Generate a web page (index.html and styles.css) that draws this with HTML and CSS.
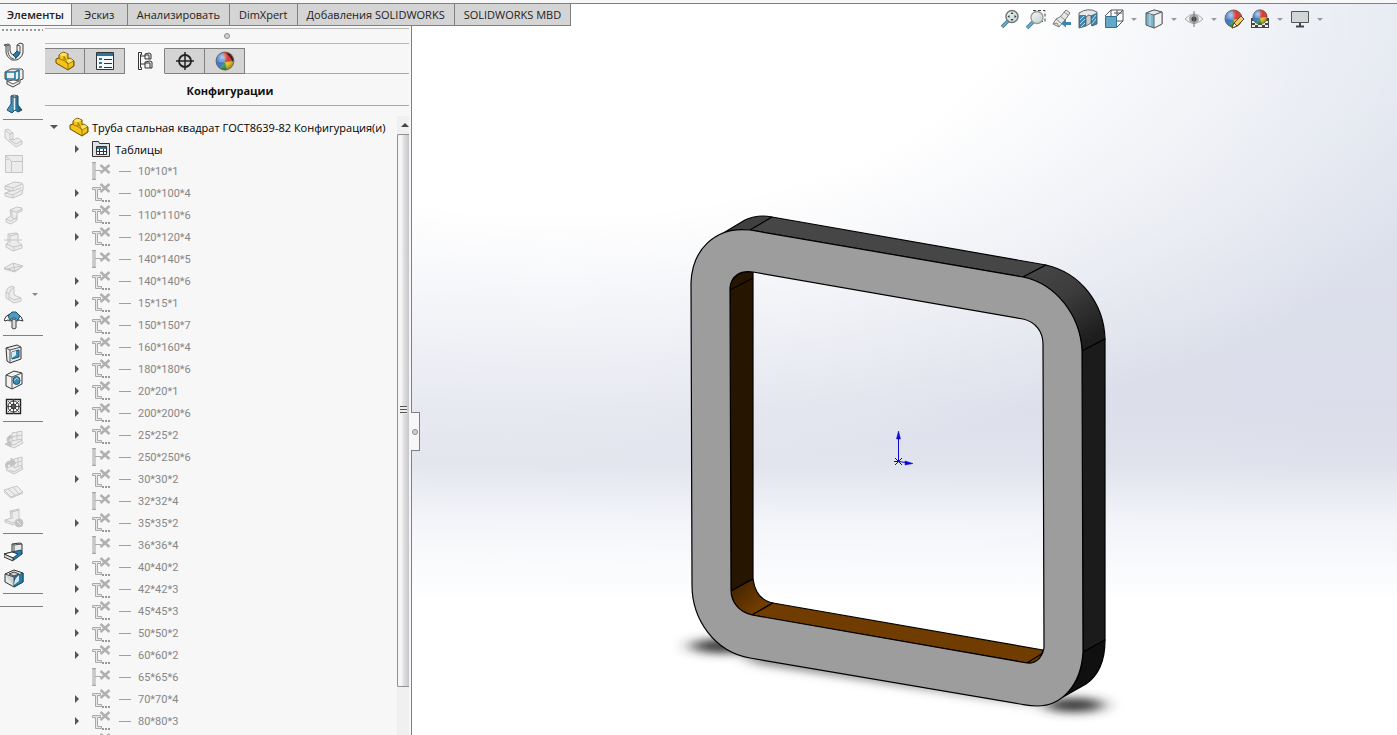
FILE: index.html
```html
<!DOCTYPE html>
<html lang="ru">
<head>
    <meta charset="UTF-8">
    <meta name="viewport" content="width=device-width, initial-scale=1.0">
    <title>SOLIDWORKS - Труба стальная квадрат ГОСТ8639-82</title>
    <link rel="stylesheet" href="styles.css">
</head>
<body>
    <!-- Icons used more than once -->
    <svg class="sprite" aria-hidden="true">
        <defs>
            <linearGradient id="blueSteel" x1="0" x2="1"><stop offset="0" stop-color="#5fa3c4"/><stop offset="1" stop-color="#145a80"/></linearGradient>
            <linearGradient id="lens" x1="0" y1="0" x2="1" y2="1"><stop offset="0" stop-color="#f4fafa"/><stop offset="1" stop-color="#bccfd0"/></linearGradient>
            <radialGradient id="shine" cx=".35" cy=".3" r=".7"><stop offset="0" stop-color="#fff" stop-opacity=".6"/><stop offset=".5" stop-color="#fff" stop-opacity="0"/><stop offset="1" stop-color="#000" stop-opacity=".3"/></radialGradient>
        </defs>
        <symbol id="part" viewBox="0 0 20 20">
            <path d="M4 4l4-3 5 2v5l2-1 4 3v5l-6 4L1 12V8l3-1z" fill="#f3c31a" stroke="#6b5000" stroke-linejoin="round"/>
            <path d="M4.500 4L8 1.500 12.500 3 9 5.500zM11 10l4-2.500 3.500 2.500-5 3.500z" fill="#ffe566"/>
            <path d="M9 5.500v4L13 13v5.500l5.500-3.500v-5L13 13zM4.500 7v1L9 9.500" fill="none" stroke="#8a6800" stroke-width=".8"/>
        </symbol>
        <symbol id="ball" viewBox="0 0 20 20">
            <circle cx="10" cy="10" r="9" fill="#e8c128"/>
            <path d="M10 11L1 10a9 9 0 0 0 4 7.500z" fill="#3b76c9"/>
            <path d="M10 11L1 10A9 9 0 0 1 9 1z" fill="#4a82cf"/>
            <path d="M10 11L9 1a9 9 0 0 1 10 9z" fill="#d33a35"/>
            <path d="M10 11l-5 6.500A9 9 0 0 0 12 19z" fill="#35a04e"/>
            <circle cx="10" cy="10" r="9" fill="url(#shine)" stroke="#555" stroke-width=".7"/>
        </symbol>
        <symbol id="cfg" viewBox="0 0 20 20">
            <path d="M1 2h2v16H1zM0 1.500h4M0 18.500h4M3 9.500h6" fill="#e8e8e8" stroke="#a9a9a9"/>
            <path d="M8.500 4l9 8M17.500 4l-9 8" stroke="#b0b0b0" stroke-width="2.500"/>
        </symbol>
        <symbol id="cfgTree" viewBox="0 0 20 20">
            <path d="M.5 4.500h8v2h-3v9h4v2h-6v-11h-3z" fill="#e8e8e8" stroke="#a9a9a9"/>
            <path d="M8.500 1l9 8M17.500 1l-9 8" stroke="#b0b0b0" stroke-width="2.500"/>
            <path d="M10 18h2M13 18h2M16 18h2" stroke="#999" stroke-width="2"/>
        </symbol>
    </svg>

    <div class="topStrip"></div>

    <div class="workspace">
        <nav class="tabs">
            <button type="button" class="tab active">Элементы</button>
            <button type="button" class="tab">Эскиз</button>
            <button type="button" class="tab">Анализировать</button>
            <button type="button" class="tab">DimXpert</button>
            <button type="button" class="tab">Добавления SOLIDWORKS</button>
            <button type="button" class="tab">SOLIDWORKS MBD</button>
        </nav>

        <aside class="side">
            <div class="toolbar">
                <button type="button" class="tool" aria-label="Базовая кромка"><svg viewBox="0 0 20 20"><path d="M0 3l4-1 2 1v6q1 4 4 4 3-1 3-4V3l3-2 3 1v9q-2 6-7 7H8q-6-3-6-9V4z" fill="#eef1f1" stroke="#444"/><path d="M2 4l3-1M4 3v7q1 6 6 7M13 3l3 1v7q-2 4-5 6" fill="none" stroke="#555"/><path d="M9 13l4-4 3 2-4 5z" fill="#2b7ca8" stroke="#164f70"/></svg></button>
                <button type="button" class="tool" aria-label="Преобразовать"><svg viewBox="0 0 20 20"><path d="M1 4l6-3h11l1 1v9l-3 1v3l-7 4-6-3v-5H1z" fill="#eef0f0" stroke="#444"/><path d="M2 4h9v7H2zM11 4l4-2M15 2v9l-4 2" fill="none" stroke="#24769f" stroke-width="1.600"/><path d="M3 13l7-1 5 1-6 3z" fill="#fff" stroke="#555"/></svg></button>
                <button type="button" class="tool" aria-label="Сгиб по сечениям"><svg viewBox="0 0 20 20"><path d="M7 2h7v9l4 5-4 2-3-2-3 3-5-3 4-6z" fill="url(#blueSteel)" stroke="#164f70"/><path d="M7 2q3-2 7 0-3 2-7 0" fill="#eee" stroke="#555"/><path d="M10.500 4v12" stroke="#e6f2f8" stroke-width="1.500"/></svg></button>
                <hr>
                <button type="button" class="tool off" aria-label="Ребро-кромка" disabled><svg viewBox="0 0 20 20"><path d="M1 2l3-1 5 4v7l5-2 4 3v3l-6 3L1 10z"/><path class="line" d="M1 2l5 4v6l6 4 6-3M6 6l3-1M6 12l3-1"/></svg></button>
                <button type="button" class="tool off" aria-label="Каемка" disabled><svg viewBox="0 0 20 20"><path d="M1.500 1.500h17v17h-17z"/><path class="line" d="M7.500 7.500h11M7.500 7.500v11M1.500 1.500l6 6M1.500 6l3-1"/></svg></button>
                <button type="button" class="tool off" aria-label="Подшивка" disabled><svg viewBox="0 0 20 20"><path d="M1 6l9-4 8 1q2 2 1 6l-1 5-9 4-8-2v-3l6-2-6-2z"/><path class="line" d="M1 6l8 2 9-4M1 9l8 2 8-3M9 8v3M1 13l8 2 9-5M9 15v3"/></svg></button>
                <button type="button" class="tool off" aria-label="Изгиб" disabled><svg viewBox="0 0 20 20"><path d="M6 4l7-3 5 1v3l-5 2v7l-6 4-5-2v-3l5-3z"/><path class="line" d="M6 4l6 2 6-3M8 5v7l5 1M2 13l5 2 6-4"/></svg></button>
                <button type="button" class="tool off" aria-label="Нарисованный сгиб" disabled><svg viewBox="0 0 20 20"><path d="M4 2l8-1 2 1v8l4 3v3l-9 3-7-4v-3l2-1z"/><path class="line" d="M4 2l2 2v7M6 4l8-2M0 8h18M2 12l8 3 8-2M10 15v4"/></svg></button>
                <button type="button" class="tool off" aria-label="Поперечный излом" disabled><svg viewBox="0 0 20 20"><path d="M0 10l9-5 10 3-8 6-11-3z"/><path class="line" d="M0 10l11 3 8-5M9 5l2 8M3 11l14-3"/></svg></button>
                <button type="button" class="tool off more" aria-label="Углы" disabled><svg viewBox="0 0 20 20"><path d="M2 8q1-5 6-6l2 1v8l7 3v3l-7 2-8-5z"/><path class="line" d="M2 8l3 2v6M5 10q1-5 5-7M5 13l5 3 7-2"/></svg></button>
                <button type="button" class="tool" aria-label="Инструмент формы"><svg viewBox="0 0 20 20"><path d="M0 10q2-5 6-6h7q5 2 6 7l-4-1-2 1-3-1-4 1-2-1-3 1z" fill="#fff" stroke="#333"/><path d="M4 6l4-4h4l4 4-2 4-3-2H9l-3 2z" fill="#4d9cc0" stroke="#164f70"/><path d="M8 10q2-2 4 0v8q-2 2-4 0z" fill="#ddd" stroke="#444"/></svg></button>
                <hr>
                <button type="button" class="tool" aria-label="Вытянутый вырез"><svg viewBox="0 0 20 20"><path d="M2 4l11-3 4 2v12l-11 4-3-2z" fill="#e8ecec" stroke="#333"/><path d="M2 4l4 2v13M6 6l11-3" fill="none" stroke="#555"/><path d="M8 8l7-2v7l-7 2z" fill="#3b8cb3" stroke="#1a4d69"/><path d="M8 8l4-1v4l-4 3z" fill="#d6edf7"/></svg></button>
                <button type="button" class="tool" aria-label="Простое отверстие"><svg viewBox="0 0 20 20"><path d="M2 5l8-4 8 2v11L8 19l-6-3z" fill="#f1f2f2" stroke="#333"/><path d="M2 5l6 2v12M8 7l10-4" fill="none" stroke="#555"/><ellipse cx="12.500" cy="10.500" rx="3.500" ry="4" fill="#3b8cb3" stroke="#1a4d69"/><path d="M10.500 10.500q2-4 4-1" fill="none" stroke="#d6edf7"/></svg></button>
                <button type="button" class="tool" aria-label="Вентиляционное отверстие"><svg viewBox="0 0 20 20"><path d="M2.500 3.500h14v14h-14z" fill="#fff" stroke="#222" stroke-width="1.400"/><path d="M9.500 3v15M2 10.500h15M4 5l11 11M15 5L4 16" stroke="#555"/><circle cx="9.500" cy="10.500" r="5.500" fill="none" stroke="#222"/><circle cx="9.500" cy="10.500" r="2.500" fill="none" stroke="#222"/></svg></button>
                <hr>
                <button type="button" class="tool off" aria-label="Разогнуть" disabled><svg viewBox="0 0 20 20"><path d="M8 3l10-2v10l1 2-9 5-8-4 6-3z"/><path class="line" d="M8 11l10-2M8 7l10-2M13 2v8M4 13l6 2 8-5"/><path class="arrow" d="M7 5Q1 7 4 13l-3 1 6 3v-6l-2 1Q4 9 8 8z"/></svg></button>
                <button type="button" class="tool off" aria-label="Согнуть" disabled><svg viewBox="0 0 20 20"><path d="M10 3l8-2v10l1 2-9 5-8-4 4-4z"/><path class="line" d="M10 3v9l8-3M10 7l8-2M14 2v9M5 14l5 2 8-5"/><path class="arrow" d="M2 12Q0 5 7 5V2l5 5-5 4V8Q2 8 4 12z"/></svg></button>
                <button type="button" class="tool off" aria-label="Развертка" disabled><svg viewBox="0 0 20 20"><path d="M0 8l13-4 6 6-12 5z"/><path class="line" d="M4 7l7 6M9 5l6 7M0 8v2l7 6 12-5"/></svg></button>
                <button type="button" class="tool off" aria-label="Без сгибов" disabled><svg viewBox="0 0 20 20"><path d="M6 3l9-2v9l2 2-8 5-8-3v-2l6-2z"/><path class="line" d="M6 3l2 1v7M8 4l7-2M1 12l8 3 8-4"/><circle class="arrow" cx="15" cy="15" r="4"/><path class="line cross" d="M13 13l4 4"/></svg></button>
                <hr>
                <button type="button" class="tool" aria-label="Разрыв"><svg viewBox="0 0 20 20"><path d="M8 2l8-1 2 1v10l-9 2-1-3z" fill="#e6eaea" stroke="#333"/><path d="M8 2l2 1v8M10 3l8-1" fill="none" stroke="#555"/><path d="M0 12l8-2 9-2 1 4-8 6-9-3z" fill="#2b7ca8" stroke="#164f70"/><path d="M0 12l8-2 6 2-5 4z" fill="#fff" stroke="#333"/><path d="M0 12v3l9 4v-3z" fill="#ddd" stroke="#333"/></svg></button>
                <button type="button" class="tool" aria-label="Вставить сгибы"><svg viewBox="0 0 20 20"><path d="M1 6l9-4 9 3v9l-9 5-9-5z" fill="#e6eaea" stroke="#333"/><path d="M10 9l9-4v9l-9 5z" fill="#2b7ca8" stroke="#164f70"/><path d="M1 6l9 3v10M5 6l5-2 5 2-5 2z" fill="#cdd3d3" stroke="#444"/><path d="M10 17q0-6 5-10v6z" fill="#cfe8f3"/></svg></button>
                <hr>
                <hr class="end">
            </div>

            <div class="manager">
                <div class="pin"><span class="dot"></span></div>
                <div class="managerTabs">
                    <button type="button" aria-label="Дерево конструирования"><svg viewBox="0 0 20 20"><use href="#part"/></svg></button>
                    <button type="button" aria-label="Свойства"><svg viewBox="0 0 20 20"><path d="M1.500 1.500h17v17h-17z" fill="#f4f8fa" stroke="#333"/><path d="M2 2h16v3H2z" fill="#2778a0"/><path d="M4 7h3v2H4zM4 11h3v2H4zM4 15h3v2H4z" fill="#2778a0"/><path d="M9 8.500h8M9 12.500h8M9 16.500h8" stroke="#333"/></svg></button>
                    <button type="button" class="active" aria-label="Конфигурации"><svg viewBox="0 0 20 20"><path d="M3.500 1.500h3v2h-1v13h1v2h-3zM6 5h4M6 13h4" fill="#fff" stroke="#333"/><path d="M10 3l4-1 2 1v5h-6zM10 11l5-1 2 1v6h-7z" fill="#eee" stroke="#333"/><path d="M10 4h4v4M10 12h5v5" fill="none" stroke="#333"/></svg></button>
                    <button type="button" aria-label="DimXpert"><svg viewBox="0 0 20 20"><circle cx="10" cy="10" r="6" fill="none" stroke="#222" stroke-width="1.800"/><path d="M10 1v18M1 10h18" stroke="#222" stroke-width="1.500"/></svg></button>
                    <button type="button" aria-label="Отображение"><svg viewBox="0 0 20 20"><use href="#ball"/><path d="M11 2q5 0 7 6v3q-2-5-7-9z" fill="#222"/></svg></button>
                </div>
                <h2>Конфигурации</h2>
                <div class="treeBox">
                    <ul class="tree" id="tree">
                        <li class="root"><span class="arrow open"></span><svg viewBox="0 0 20 20"><use href="#part"/></svg><span>Труба стальная квадрат ГОСТ8639-82 Конфигурация(и)</span></li>
                        <li class="folder"><span class="arrow"></span><svg viewBox="0 0 20 20"><path d="M.5 17.500v-15h6l1 2h10v13z" fill="#dfe3e6" stroke="#333"/><path d="M4.500 7.500h10v8h-10z" fill="#fff" stroke="#333"/><path d="M5 8h9v2H5z" fill="#2778a0"/><path d="M5 12.500h9M7.500 10v5M11.500 10v5" stroke="#333"/></svg><span>Таблицы</span></li>
                    </ul>
                    <div class="scroll">
                        <div class="scrollUp"></div>
                        <div class="scrollTrack"><div class="thumb"><i></i></div></div>
                    </div>
                </div>
            </div>
            <div class="splitter"><span class="dot"></span></div>
        </aside>

        <main class="viewport">
            <div class="viewTools">
                <button type="button" aria-label="Изменить в размер экрана"><svg viewBox="0 0 20 20"><path d="M2 18l6-6" stroke="#3b7c9c" stroke-width="3.500"/><path d="M2 18l6-6" stroke="#7fb6cf" stroke-width="1.500"/><circle cx="12" cy="7.500" r="6" fill="url(#lens)" stroke="#777" stroke-width="1.500"/><path d="M12 3l1.500 2h-3zM12 12l1.500-2h-3zM7.500 7.500l2-1.500v3zM16.500 7.500l-2-1.500v3z" fill="#333"/></svg></button>
                <button type="button" aria-label="Увеличить элемент вида"><svg viewBox="0 0 20 20"><path d="M7 1.500h12v11h-3" fill="none" stroke="#444" stroke-dasharray="3 2"/><path d="M1 19l6-6" stroke="#3b7c9c" stroke-width="3.500"/><path d="M1 19l6-6" stroke="#7fb6cf" stroke-width="1.500"/><circle cx="11" cy="8.500" r="6" fill="url(#lens)" stroke="#999" stroke-width="1.300"/></svg></button>
                <button type="button" aria-label="Предыдущий вид"><svg viewBox="0 0 20 20"><path d="M14 1l4 3-5 7-6 7-6-3 3-5 4-2z" fill="#e8e8e4" stroke="#777"/><path d="M8 7l5 4M4 10l5 4M1 15l4-1 2 4M12 3l4 3" fill="none" stroke="#888"/><path d="M9 14.500l5-4V13h5v3h-5v2.500z" fill="#3c87ad"/></svg></button>
                <button type="button" aria-label="Разрез"><svg viewBox="0 0 20 20"><path d="M1 4q9-6 18-1v12l-5 2V7q-4-2-6 1v9l-7 2z" fill="#e6e9ea" stroke="#666"/><path d="M8 8q3-3 5-1v7l-5 3z" fill="#c9ced0" stroke="#777"/><path d="M1.500 6.500h6v10l-6 2zM13.500 6.500l5-2v10l-5 2z" fill="#3e87aa" stroke="#2a6380" stroke-width=".7"/><path d="M2 11l4-4M2 15l5-5M3 18l4-4M14 11l4-5M14 15l4-5" stroke="#b5dcec"/></svg></button>
                <button type="button" aria-label="Ориентация вида"><svg viewBox="0 0 20 20"><path d="M1 7l6-6h12v11l-6 6" fill="#fff" stroke="#555"/><path d="M13 7l6-6M7 1v6M13 12h6M10 4h8M13 1v6" fill="none" stroke="#555"/><path d="M1.500 7.500h11v11h-11z" fill="#63a9c6" stroke="#31718f"/></svg></button>
                <span class="drop"></span>
                <button type="button" aria-label="Стиль отображения"><svg viewBox="0 0 20 20"><path d="M2 4l8-3 8 2v12l-8 4-8-3z" fill="#7bb6cf" stroke="#555"/><path d="M2 4l8 2 8-3-8-2z" fill="#dcebf0" stroke="#666"/><path d="M10 6l8-3v12l-8 4z" fill="#f0f2f3" stroke="#666"/><path d="M6 5v12" stroke="#c9e2ec"/></svg></button>
                <span class="drop"></span>
                <button type="button" aria-label="Скрыть или показать"><svg viewBox="0 0 20 20"><path d="M1 10q9-10 18 0-9 9-18 0z" fill="#f4f4f4" stroke="#aaa"/><circle cx="10" cy="10" r="5" fill="#a9aaac"/><circle cx="10" cy="10" r="2.500" fill="#444"/><path d="M10 2v16" stroke="#777"/></svg></button>
                <span class="drop"></span>
                <button type="button" aria-label="Редактировать внешний вид"><svg viewBox="0 0 20 20"><use href="#ball" width="19" height="19"/><path d="M8 19l2-5 7-7 3 3-7 7z" fill="#f1cb62" stroke="#5e4a20"/><path d="M8 19l2-5 3 3z" fill="#fff" stroke="#5e4a20"/></svg></button>
                <button type="button" aria-label="Применить сцену"><svg viewBox="0 0 20 20"><path d="M1 9h18v10H1z" fill="#444"/><path d="M2 12h3v2H2zM8 12h3v2H8zM15 12h3v2h-3zM5 14h3v2H5zM12 14h3v2h-3zM2 16h3v2H2zM8 16h4v2H8zM15 16h3v2h-3z" fill="#eee"/><use href="#ball" x="2" width="16" height="16"/></svg></button>
                <span class="drop"></span>
                <button type="button" aria-label="Настройки вида"><svg viewBox="0 0 20 20"><path d="M1.500 2.500h17v11h-17z" fill="#d3d6d8" stroke="#555"/><path d="M10 14v3M6 17.500h8" stroke="#444" stroke-width="2"/></svg></button>
                <span class="drop"></span>
            </div>

            <svg class="model" viewBox="412 4 985 731" role="img" aria-label="Модель трубы">
                <defs>
                    <filter id="soft" x="-50%" y="-100%" width="200%" height="300%"><feGaussianBlur stdDeviation="9 5"/></filter>
                    <linearGradient id="cornerTop" x1="0" y1="0" x2=".6" y2="1"><stop offset="0" stop-color="#474747"/><stop offset=".5" stop-color="#3c3c3c"/><stop offset="1" stop-color="#1d1d1d"/></linearGradient>
                    <linearGradient id="cornerInner" x1="0" y1="0" x2="1" y2="1"><stop offset="0" stop-color="#3a2000"/><stop offset=".7" stop-color="#703c00"/></linearGradient>
                </defs>
                <!-- shadow on the floor -->
                <g filter="url(#soft)">
                    <ellipse cx="724" cy="646" rx="34" ry="7" fill="#333"/>
                    <ellipse cx="1074" cy="705" rx="30" ry="7" fill="#333"/>
                    <path d="M735 648l300 54v3l-280-42z" fill="#777"/>
                </g>
                <!-- outer sides -->
                <g stroke="#000" stroke-width="1.200" stroke-linejoin="round">
                    <path d="M725 232L745 220Q758 214 772 217L750 231z" fill="#404040"/>
                    <path d="M750 230L772 217 1046 265 1023 277z" fill="#464646"/>
                    <path d="M1023 277L1046 265C1081 273 1104 304 1105 339L1082 351C1080 315 1056 284 1023 277z" fill="url(#cornerTop)"/>
                    <path d="M1082 351L1105 339V640L1083 652z" fill="#1b1b1b"/>
                    <path d="M1083 652L1105 640Q1105 671 1086 684L1063 697Q1083 680 1083 652z" fill="#101010"/>
                    <!-- inner sides -->
                    <path d="M730 290V285Q736 270 753 272V579L731 591z" fill="#261500"/>
                    <path d="M730 290L753 278" fill="none"/>
                    <path d="M731 591L753 579Q756 600 773 603L752 615Q732 610 731 591z" fill="url(#cornerInner)"/>
                    <path d="M752 615L773 603 1043 650Q1040 664 1027 663z" fill="#703c00"/>
                    <path d="M1027 663L1043 653" fill="none"/>
                    <!-- front face -->
                    <path fill="#9d9d9d" fill-rule="evenodd" d="M691 283C692 250 715 226 750 230L1023 277C1056 284 1080 315 1082 350L1083 652C1081 685 1062 706 1037 706 1030 706 1026 705 1020 704L750 658C715 652 692 620 692 585ZM730 288C731 276 740 270 753 272L1023 319C1036 322 1043 332 1043 344L1044 648C1042 658 1036 664 1027 663L752 615C739 612 731 602 731 590Z"/>
                </g>
                <!-- origin -->
                <g stroke="#0a0ad0" fill="#0a0ad0">
                    <path d="M898.500 438v24M894 461.500h6M898 461.500l8 1M895 458l7 7M902 458l-7 7" fill="none"/>
                    <path d="M898.500 431l2 8h-4zM913 463.500l-8-2.500v4z" stroke-width=".5"/>
                </g>
            </svg>
        </main>
    </div>

    <script>
        // Configurations with a leading "-" have no children
        const configs = [
            '-10*10*1', '100*100*4', '110*110*6', '120*120*4', '-140*140*5', '140*140*6',
            '15*15*1', '150*150*7', '160*160*4', '180*180*6', '20*20*1', '200*200*6',
            '25*25*2', '-250*250*6', '30*30*2', '-32*32*4', '35*35*2', '-36*36*4',
            '40*40*2', '42*42*3', '45*45*3', '50*50*2', '60*60*2', '-65*65*6',
            '70*70*4', '80*80*3', ''
        ];
        const tree = document.getElementById('tree');

        configs.forEach(function (item) {
            const single = item[0] === '-';
            const name = single ? item.slice(1) : item;
            const row = document.createElement('li');
            row.className = 'config';
            row.innerHTML = '<span class="arrow' + (single ? ' none' : '') + '"></span>' +
                '<svg viewBox="0 0 20 20"><use href="#' + (single ? 'cfg' : 'cfgTree') + '"/></svg>' +
                '<span class="dash"></span><span>' + name + '</span>';
            tree.appendChild(row);
        });
    </script>
</body>
</html>
```
FILE: styles.css
```css
* {
    box-sizing: border-box;
}

body {
    margin: 0;
    height: 100vh;
    display: flex;
    flex-direction: column;
    overflow: hidden;
    font-family: "Open Sans", "Noto Sans", sans-serif;
    font-size: 11px;
    color: #000;
    background: #f7f7f7;
}

button {
    font: inherit;
    color: inherit;
    border: 0;
    padding: 0;
    background: none;
}

.sprite {
    position: absolute;
    width: 0;
    height: 0;
}

.topStrip {
    height: 4px;
    flex: none;
    border-bottom: 1px solid #808080;
}

/* The command tabs run over both columns */
.workspace {
    flex: 1;
    min-height: 0;
    display: grid;
    grid-template-columns: 412px 1fr;
    grid-template-rows: 22px minmax(0, 1fr);
}

.tabs {
    grid-area: 1 / 1 / 2 / 3;
    justify-self: start;
    z-index: 1;
    display: flex;
}

.tab {
    min-width: 56px;
    padding: 0 9px;
    border-right: 1px solid #808080;
    border-bottom: 1px solid #808080;
    background: #d4d4d4;
    color: #222;
    white-space: nowrap;
}

.tab.active {
    padding: 0 7px;
    background: #f7f7f7;
    font-weight: 600;
}

/* Left side */
.side {
    grid-area: 1 / 1 / 3 / 2;
    position: relative;
    display: flex;
    padding-top: 24px;
    border-right: 1px solid #808080;
    min-height: 0;
}

.toolbar {
    width: 45px;
    flex: none;
    display: flex;
    flex-direction: column;
    align-items: flex-start;
    padding-top: 11px;
    background: repeating-linear-gradient(90deg, #999 0 2px, transparent 2px 4px) 2px 1px / 41px 2px no-repeat;
}

.tool {
    position: relative;
    width: 28px;
    height: 26px;
    flex: none;
    display: flex;
    align-items: center;
    justify-content: center;
}

.tool svg {
    width: 20px;
    height: 20px;
}

.tool.off path,
.tool.off circle {
    fill: #ececec;
    stroke: #c6c6c6;
}

.tool.off .line {
    fill: none;
}

.tool.off .arrow {
    fill: #c2c2c2;
}

.tool.off .cross {
    stroke: #eee;
}

.tool.more::after {
    content: "";
    position: absolute;
    left: 32px;
    top: 12px;
    border: 3px solid transparent;
    border-top-color: #888;
}

.toolbar hr {
    width: 40px;
    height: 1px;
    flex: none;
    margin: 2px 0 5px 3px;
    border: 0;
    background: #808080;
}

.toolbar hr.end {
    width: 43px;
    margin: 7px 0 0;
}

.manager {
    flex: 1;
    min-width: 0;
    margin-right: 2px;
    display: flex;
    flex-direction: column;
}

.pin {
    height: 16px;
    flex: none;
    display: flex;
    align-items: center;
    justify-content: center;
    border-top: 1px solid #b8b8b8;
    border-bottom: 1px solid #b8b8b8;
}

.dot {
    width: 6px;
    height: 6px;
    border: 1px solid #8c8c8c;
    border-radius: 50%;
    background: #d0d0d0;
}

.managerTabs {
    display: flex;
    flex: none;
    height: 26px;
    margin-top: 4px;
    box-shadow: inset 0 -1px #ababab;
}

.managerTabs button {
    width: 40px;
    display: flex;
    align-items: center;
    justify-content: center;
    border: 1px solid #808080;
    border-left: 0;
    background: #d4d4d4;
}

.managerTabs .active {
    background: #f7f7f7;
    border-color: transparent #808080 transparent transparent;
}

.managerTabs svg {
    width: 20px;
    height: 20px;
}

.manager h2 {
    flex: none;
    height: 32px;
    margin: 0;
    padding-left: 6px;
    border-bottom: 1px solid #ababab;
    color: #111;
    font-size: 11px;
    line-height: 34px;
    text-align: center;
}

.treeBox {
    flex: 1;
    min-height: 0;
    display: flex;
    margin-top: 10px;
}

.tree {
    flex: 1;
    min-width: 0;
    margin: 0;
    padding: 0;
    overflow: hidden;
    list-style: none;
}

.tree li {
    display: flex;
    align-items: center;
    height: 22px;
    padding-left: 27px;
    white-space: nowrap;
}

.tree li.root {
    padding-left: 4px;
}

.tree li svg {
    width: 20px;
    height: 20px;
    flex: none;
    margin: 0 3px 0 10px;
}

.tree .config {
    color: #868686;
    font-family: Roboto, "Open Sans", sans-serif;
}

.tree .arrow {
    width: 10px;
    flex: none;
    display: flex;
    justify-content: center;
}

.tree .arrow::before {
    content: "";
    border: 4px solid transparent;
    border-left: 4px solid #555;
    border-right: 0;
}

.tree .arrow.open::before {
    border: 4px solid transparent;
    border-top: 4px solid #555;
    border-bottom: 0;
}

.tree .arrow.none::before {
    display: none;
}

.dash {
    width: 12px;
    height: 1px;
    flex: none;
    margin: 0 7px 0 4px;
    background: #a0a0a0;
}

.scroll {
    width: 12px;
    flex: none;
    display: flex;
    flex-direction: column;
    background: #f0f0f0;
}

.scrollUp {
    height: 18px;
    display: flex;
    align-items: center;
    justify-content: center;
    padding-left: 3px;
}

.scrollUp::before {
    content: "";
    border: 4px solid transparent;
    border-bottom-color: #444;
    border-top: 0;
}

.scrollTrack {
    flex: 1;
}

.thumb {
    height: 92%;
    display: flex;
    align-items: center;
    justify-content: center;
    border: 1px solid #909090;
    border-right: 0;
    border-radius: 2px 0 0 2px;
    background: linear-gradient(90deg, #f6f6f6 0 30%, #e2e2e4 50%, #c6c6ca);
}

.thumb i {
    width: 7px;
    height: 8px;
    background: repeating-linear-gradient(#555 0 1px, #eee 1px 3px);
}

/* Handle that hangs over the edge of the drawing area */
.splitter {
    position: absolute;
    right: -9px;
    top: 408px;
    z-index: 2;
    width: 9px;
    height: 39px;
    display: flex;
    align-items: center;
    justify-content: center;
    border: 1px solid #808080;
    border-left: 0;
    background: #f7f7f7;
}

/* Drawing area */
.viewport {
    grid-area: 1 / 2 / 3 / 3;
    position: relative;
    min-height: 0;
    background:
        radial-gradient(100% 64% at 15% 0, #fff 45%, rgba(255, 255, 255, 0) 100%),
        linear-gradient(90deg, rgba(255, 255, 255, .15), rgba(255, 255, 255, 0)),
        linear-gradient(#dfe4ee 0, #dbdeea 55%, #dfe2ec 63%, #f2f4f9 71%, #fff 82%);
}

.viewTools {
    position: absolute;
    top: 2px;
    right: 70px;
    display: flex;
    align-items: center;
}

.viewTools button {
    width: 26px;
    height: 26px;
    display: flex;
    align-items: center;
    justify-content: center;
}

.viewTools svg {
    width: 20px;
    height: 20px;
}

.drop {
    width: 14px;
    display: flex;
    justify-content: center;
}

.drop::before {
    content: "";
    border: 3px solid transparent;
    border-top-color: #999;
    border-bottom: 0;
}

.model {
    display: block;
    width: 100%;
    height: 100%;
}
```
